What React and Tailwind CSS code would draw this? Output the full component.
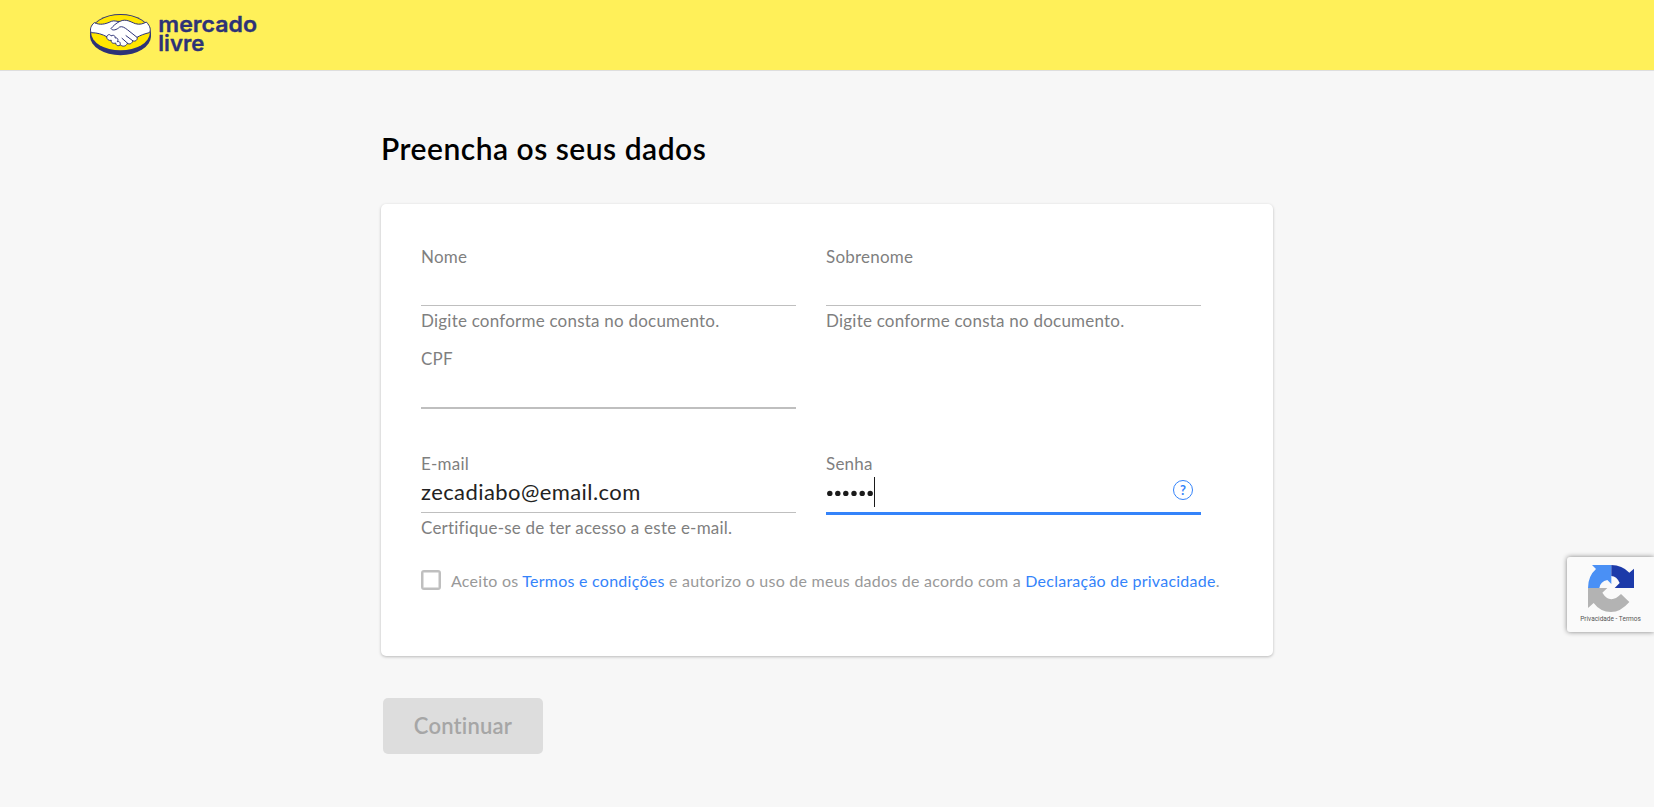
import React from "react";

function Logo() {
  return (
    <svg className="h-[70px] w-[190px]" viewBox="0 0 570 210" role="img" aria-label="mercado livre">
      <ellipse cx="121.5" cy="107" rx="91.5" ry="59" fill="#2d3277" />
      <ellipse cx="121.5" cy="101" rx="91.5" ry="59" fill="#2d3277" />
      <ellipse cx="121.5" cy="98" rx="88" ry="53" fill="#ffe600" />
      <path
        d="M43 68C60 76 76 73 94 64C104 60 112 66 120 64C138 55 152 66 166 71C180 75 190 71 199 66C212 80 213 90 208 98C194 101 181 106 171 112C174 120 165 126 158 122C157 131 148 134 142 130C139 139 128 141 122 135C114 139 108 137 107 129C98 132 92 127 94 121C85 123 80 117 80 110C67 103 52 98 34 98C28 89 33 76 43 68Z"
        fill="#fff"
        stroke="#2d3277"
        strokeWidth="3"
        strokeLinejoin="round"
      />
      <path
        d="M118 65C108 70 100 77 93 86C98 93 110 90 119 81C127 78 134 83 142 89L171 112M138 107L158 122M126 115L143 130M80 110C83 101 92 103 93 108C101 103 107 108 105 114C113 112 116 119 112 125C119 123 123 129 120 135"
        fill="none"
        stroke="#2d3277"
        strokeWidth="3"
        strokeLinecap="round"
        strokeLinejoin="round"
      />
      <g fontFamily="Inter, sans-serif" fontWeight="600" fontSize="65" fill="#2d3277" stroke="#2d3277" strokeWidth="1" strokeLinejoin="round">
        <text x="235" y="96" textLength="296" lengthAdjust="spacingAndGlyphs">mercado</text>
        <text x="235" y="154" textLength="138" lengthAdjust="spacingAndGlyphs">livre</text>
      </g>
    </svg>
  );
}

function Field({ label, helper, line, children }) {
  return (
    <div className="w-[375px]">
      <div className="h-5 pt-px text-[17px] leading-[21px] tracking-[0.22px] text-[#7f7f7f]">{label}</div>
      <div className={`flex items-center ${line}`}>{children}</div>
      {helper && (
        <div className="mt-1 whitespace-nowrap text-[17px] leading-[21px] tracking-[0.22px] text-[#7f7f7f]">{helper}</div>
      )}
    </div>
  );
}

function Recaptcha() {
  return (
    <div className="absolute right-0 top-[557px] flex h-[75px] w-[87px] flex-col items-center rounded-l-[3px] bg-[#fafafa] pt-2 shadow-[0_0_5px_gray]">
      <svg className="h-[47px] w-[46px]" viewBox="114 75 138 141">
        <path d="M126 75H184V132L172 120Q151 124 148 144H114Q114 108 138 87Z" fill="#4a90f5" />
        <path d="M184 75Q216 75 238 98L252 86V144H194L209 129Q200 108 184 108Z" fill="#1c3aa9" />
        <path d="M114 144H172L157 158Q180 195 213 162L238 186Q212 216 183 216Q151 216 131 189L114 204Z" fill="#b3b3b3" />
      </svg>
      <div className="mt-[3px] whitespace-nowrap font-[Roboto,sans-serif] text-[6.5px] leading-[9px] text-[#555]">Privacidade - Termos</div>
    </div>
  );
}

export default function App() {
  return (
    <div className="relative h-[807px] w-[1654px] overflow-hidden bg-[#f7f7f7] font-[Lato,sans-serif]">
      <header className="h-[71px] border-b border-[#dedede] bg-[#fff059] pl-20">
        <Logo />
      </header>
      <main className="ml-[381px] w-[892px]">
        <h1 className="h-[133px] whitespace-nowrap pt-[60px] text-[30px] font-semibold leading-[35px] tracking-[0.5px] text-black">Preencha os seus dados</h1>
        <section className="h-[452px] rounded-[5px] bg-white pl-10 pt-[41px] shadow-[0_1px_3px_rgba(0,0,0,0.25)]">
          <div className="flex h-[102px] gap-[30px]">
            <Field label="Nome" helper="Digite conforme consta no documento." line="h-[41px] border-b border-[#bfbfbf]" />
            <Field label="Sobrenome" helper="Digite conforme consta no documento." line="h-[41px] border-b border-[#bfbfbf]" />
          </div>
          <div className="h-[105px]">
            <Field label="CPF" line="h-[42px] border-b-2 border-[#bfbfbf]" />
          </div>
          <div className="flex h-[118px] gap-[30px]">
            <Field label="E-mail" helper="Certifique-se de ter acesso a este e-mail." line="h-[41px] border-b border-[#bfbfbf]">
              <span className="pb-px text-[22px] leading-[39px] tracking-[0.42px] text-[#222]">zecadiabo@email.com</span>
            </Field>
            <Field label="Senha" line="h-[43px] border-b-3 border-[#3483fa]">
              <svg className="h-[30px] w-[50px]" viewBox="0 0 50 30">
                <g fill="#1a1a1a">
                  {[3.8, 11.8, 19.8, 28, 36.2, 44.2].map((x) => (
                    <circle key={x} cx={x} cy="16.4" r="2.7" />
                  ))}
                  <rect x="48" y="0" width="1" height="30" />
                </g>
              </svg>
              <span className="mb-1 ml-auto mr-2 flex size-5 items-center justify-center rounded-full border-[1.2px] border-[#3483fa] text-[13px] font-bold leading-none text-[#3483fa]">?</span>
            </Field>
          </div>
          <div className="flex items-start">
            <span className="size-5 rounded-[3px] border-2 border-[#bfbfbf] shadow-[inset_0_0_0_0.5px_#bfbfbf]" />
            <p className="ml-[10px] whitespace-nowrap text-[16px] leading-[22px] tracking-[0.245px] text-[#999]">
              Aceito os <span className="text-[#3483fa]">Termos e condições</span> e autorizo o uso de meus dados de acordo com a <span className="text-[#3483fa]">Declaração de privacidade</span>.
            </p>
          </div>
        </section>
        <button className="ml-0.5 mt-[42px] h-14 w-40 rounded-[5px] bg-[#ddd] pb-0.5 text-[22px] font-semibold tracking-[0.2px] text-[#a6a6a6]">Continuar</button>
      </main>
      <Recaptcha />
    </div>
  );
}
